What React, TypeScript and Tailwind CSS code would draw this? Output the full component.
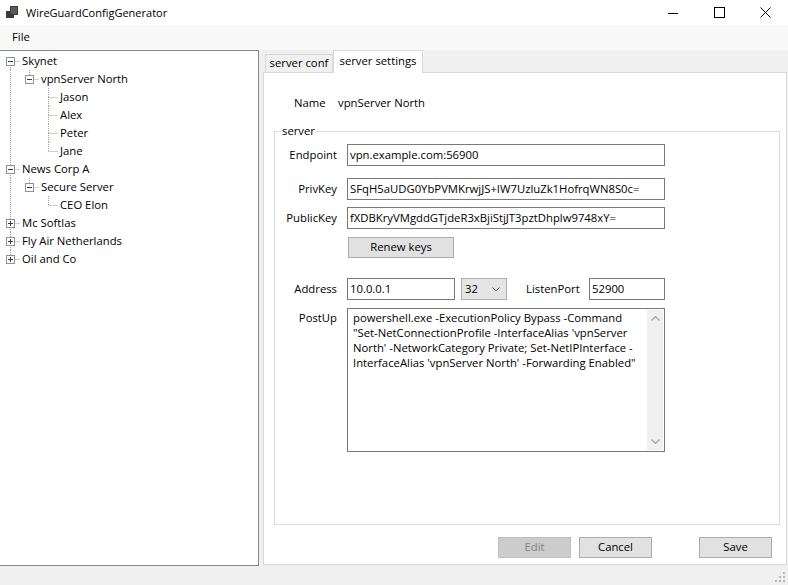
import React from "react";

type Row = {
  label: string;
  level: number;
  exp: "minus" | "plus" | null;
  anc: boolean[];
  top: boolean;
  bottom: boolean;
};

const rows: Row[] = [
  { label: "Skynet", level: 0, exp: "minus", anc: [], top: false, bottom: true },
  { label: "vpnServer North", level: 1, exp: "minus", anc: [true], top: true, bottom: false },
  { label: "Jason", level: 2, exp: null, anc: [true, false], top: true, bottom: true },
  { label: "Alex", level: 2, exp: null, anc: [true, false], top: true, bottom: true },
  { label: "Peter", level: 2, exp: null, anc: [true, false], top: true, bottom: true },
  { label: "Jane", level: 2, exp: null, anc: [true, false], top: true, bottom: false },
  { label: "News Corp A", level: 0, exp: "minus", anc: [], top: true, bottom: true },
  { label: "Secure Server", level: 1, exp: "minus", anc: [true], top: true, bottom: false },
  { label: "CEO Elon", level: 2, exp: null, anc: [true, false], top: true, bottom: false },
  { label: "Mc Softlas", level: 0, exp: "plus", anc: [], top: true, bottom: true },
  { label: "Fly Air Netherlands", level: 0, exp: "plus", anc: [], top: true, bottom: true },
  { label: "Oil and Co", level: 0, exp: "plus", anc: [], top: true, bottom: false },
];

function TreeRow({ r }: { r: Row }) {
  const w = 20 + 19 * r.level;
  const cx = 10.5 + 19 * r.level;
  const dot = { stroke: "#a0a0a0", strokeWidth: 1, strokeDasharray: "1 1" };
  return (
    <div className="flex h-[18px] items-center">
      <svg width={w} height={18} className="shrink-0">
        {r.anc.map((a, i) =>
          a ? <line key={i} x1={10.5 + 19 * i} y1={0} x2={10.5 + 19 * i} y2={18} {...dot} /> : null
        )}
        {r.top && <line x1={cx} y1={0} x2={cx} y2={9} {...dot} />}
        {r.bottom && <line x1={cx} y1={9} x2={cx} y2={18} {...dot} />}
        <line x1={cx} y1={9.5} x2={w} y2={9.5} {...dot} />
        {r.exp && (
          <g>
            <rect x={cx - 4} y={5.5} width={8} height={8} fill="#ffffff" stroke="#919191" strokeWidth={1} />
            <line x1={cx - 2.5} y1={9.5} x2={cx + 2.5} y2={9.5} stroke="#1e3c78" strokeWidth={1} />
            {r.exp === "plus" && (
              <line x1={cx} y1={7} x2={cx} y2={12} stroke="#1e3c78" strokeWidth={1} />
            )}
          </g>
        )}
      </svg>
      <span className="ml-[2px] whitespace-nowrap text-[11.3px] leading-[18px] text-black">{r.label}</span>
    </div>
  );
}

function Field({ label, value }: { label: string; value: string }) {
  return (
    <div className="flex h-[22px] items-center">
      <div className="w-[62px] text-right text-[11.3px] text-black">{label}</div>
      <div className="ml-[10px] flex h-[22px] w-[318px] items-center whitespace-nowrap border border-[#7a7a7a] bg-white pl-[2px] text-[11.3px] text-black">
        {value}
      </div>
    </div>
  );
}

export default function App() {
  return (
    <div className="flex h-[585px] w-[788px] flex-col overflow-hidden bg-[#f0f0f0] font-['Open_Sans',sans-serif] text-black">
      {/* Title bar */}
      <div className="flex h-[25px] shrink-0 items-center bg-white">
        <svg width={12} height={13} viewBox="0 0 12 13" className="ml-[6px] shrink-0">
          <rect x={4} y={0} width={8} height={9} fill="#3a3a3a" />
          <rect x={0} y={5} width={4} height={7} fill="#3a3a3a" />
          <rect x={4} y={9} width={4} height={3} fill="#3a3a3a" />
          <rect x={5} y={1} width={6} height={7} fill="#5a5a5a" />
        </svg>
        <span className="ml-[8px] text-[11px] leading-[16px] text-black">WireGuardConfigGenerator</span>
        <div className="ml-auto flex h-full items-center">
          <div className="flex h-full w-[46px] items-center justify-center">
            <svg width={10} height={10} viewBox="0 0 10 10">
              <line x1={0} y1={5.5} x2={10} y2={5.5} stroke="#000" strokeWidth={1} />
            </svg>
          </div>
          <div className="flex h-full w-[46px] items-center justify-center">
            <svg width={11} height={11} viewBox="0 0 11 11">
              <rect x={0.5} y={0.5} width={10} height={10} fill="none" stroke="#000" strokeWidth={1} />
            </svg>
          </div>
          <div className="flex h-full w-[46px] items-center justify-center">
            <svg width={11} height={11} viewBox="0 0 11 11">
              <line x1={0.5} y1={0.5} x2={10.5} y2={10.5} stroke="#000" strokeWidth={1} />
              <line x1={10.5} y1={0.5} x2={0.5} y2={10.5} stroke="#000" strokeWidth={1} />
            </svg>
          </div>
        </div>
      </div>

      {/* Menu bar */}
      <div className="flex h-[25px] shrink-0 items-center bg-[#f9f9f9] pl-[12px]">
        <span className="text-[11.3px] text-black">File</span>
      </div>

      {/* Main */}
      <div className="flex h-[516px] shrink-0">
        {/* Tree */}
        <div className="h-[516px] w-[259px] shrink-0 border-t border-r border-b border-[#828790] bg-white pt-[1px]">
          {rows.map((r, i) => (
            <TreeRow key={i} r={r} />
          ))}
        </div>

        {/* Tab control */}
        <div className="ml-[4px] mr-[1px] mb-[1px] flex flex-1 flex-col">
          <div className="flex h-[22px] shrink-0 items-end pl-[2px]">
            <div className="flex h-[18px] w-[68px] items-center justify-center border border-b-0 border-[#d9d9d9] bg-[#f0f0f0] text-[11.3px]">
              server conf
            </div>
            <div className="relative z-10 -mb-px flex h-[23px] w-[90px] items-start justify-center border border-b-0 border-[#d9d9d9] bg-white pt-[2px] text-[11.3px]">
              server settings
            </div>
          </div>
          <div className="flex flex-1 flex-col border border-[#d9d9d9] bg-white">
            {/* Name */}
            <div className="mt-[22px] flex h-[16px] items-center pl-[30px] text-[11.3px]">
              <span className="w-[44px]">Name</span>
              <span>vpnServer North</span>
            </div>

            {/* Group box */}
            <fieldset className="mt-[12px] ml-[10px] mr-[6px] h-[402px] border border-[#dcdcdc]">
              <legend className="ml-[6px] px-[1px] text-[11.3px] leading-[16px]">server</legend>
              <div className="flex flex-col pt-[5px]">
                <Field label="Endpoint" value="vpn.example.com:56900" />
                <div className="mt-[12px]">
                  <Field label="PrivKey" value="SFqH5aUDG0YbPVMKrwjJS+IW7UzluZk1HofrqWN8S0c=" />
                </div>
                <div className="mt-[7px]">
                  <Field label="PublicKey" value="fXDBKryVMgddGTjdeR3xBjiStjJT3pztDhplw9748xY=" />
                </div>
                <div className="mt-[8px] pl-[73px]">
                  <div className="flex h-[21px] w-[106px] items-center justify-center border border-[#adadad] bg-[#e1e1e1] text-[11.3px]">
                    Renew keys
                  </div>
                </div>

                {/* Address row */}
                <div className="mt-[20px] flex h-[22px] items-center">
                  <div className="w-[62px] text-right text-[11.3px]">Address</div>
                  <div className="ml-[10px] flex h-[22px] w-[108px] items-center border border-[#7a7a7a] bg-white pl-[2px] text-[11.3px]">
                    10.0.0.1
                  </div>
                  <div className="ml-[6px] flex h-[22px] w-[46px] items-center border border-[#adadad] bg-[#e5e5e5] pl-[3px] text-[11.3px]">
                    <span>32</span>
                    <svg width={8} height={5} viewBox="0 0 8 5" className="ml-auto mr-[6px]">
                      <polyline points="0.5,0.5 4,4 7.5,0.5" fill="none" stroke="#606060" strokeWidth={1} />
                    </svg>
                  </div>
                  <div className="ml-[19px] w-[53px] whitespace-nowrap text-[11.3px]">ListenPort</div>
                  <div className="ml-[10px] flex h-[22px] w-[76px] items-center border border-[#7a7a7a] bg-white pl-[2px] text-[11.3px]">
                    52900
                  </div>
                </div>

                {/* PostUp */}
                <div className="mt-[8px] flex">
                  <div className="w-[62px] pt-[2px] text-right text-[11.3px]">PostUp</div>
                  <div className="ml-[10px] flex h-[144px] w-[318px] border border-[#7a7a7a] bg-white">
                    <div className="flex-1 pl-[5px] pt-[1px] text-[11.3px] leading-[15px]">
                      <div className="whitespace-nowrap">powershell.exe -ExecutionPolicy Bypass -Command</div>
                      <div className="whitespace-nowrap">"Set-NetConnectionProfile -InterfaceAlias 'vpnServer</div>
                      <div className="whitespace-nowrap">North' -NetworkCategory Private; Set-NetIPInterface -</div>
                      <div className="whitespace-nowrap">InterfaceAlias 'vpnServer North' -Forwarding Enabled"</div>
                    </div>
                    <div className="my-[1px] mr-[1px] flex w-[16px] flex-col items-center justify-between bg-[#f0f0f0] py-[6px]">
                      <svg width={9} height={5} viewBox="0 0 9 5">
                        <polyline points="0.5,4.5 4.5,0.5 8.5,4.5" fill="none" stroke="#a3a3a3" strokeWidth={1.2} />
                      </svg>
                      <svg width={9} height={5} viewBox="0 0 9 5">
                        <polyline points="0.5,0.5 4.5,4.5 8.5,0.5" fill="none" stroke="#a3a3a3" strokeWidth={1.2} />
                      </svg>
                    </div>
                  </div>
                </div>
              </div>
            </fieldset>

            {/* Buttons */}
            <div className="mt-[12px] flex pl-[234px]">
              <div className="flex h-[21px] w-[73px] items-center justify-center border border-[#bfbfbf] bg-[#cccccc] text-[11.3px] text-[#838383]">
                Edit
              </div>
              <div className="ml-[8px] flex h-[21px] w-[73px] items-center justify-center border border-[#adadad] bg-[#e1e1e1] text-[11.3px]">
                Cancel
              </div>
              <div className="ml-[47px] flex h-[21px] w-[73px] items-center justify-center border border-[#adadad] bg-[#e1e1e1] text-[11.3px]">
                Save
              </div>
            </div>
          </div>
        </div>
      </div>

      {/* Status bar */}
      <div className="flex flex-1 items-end justify-end pr-[2px] pb-[2px]">
        <svg width={11} height={11} viewBox="0 0 11 11">
          <rect x={8} y={0} width={2} height={2} fill="#b8b8b8" />
          <rect x={8} y={4} width={2} height={2} fill="#b8b8b8" />
          <rect x={4} y={4} width={2} height={2} fill="#b8b8b8" />
          <rect x={8} y={8} width={2} height={2} fill="#b8b8b8" />
          <rect x={4} y={8} width={2} height={2} fill="#b8b8b8" />
          <rect x={0} y={8} width={2} height={2} fill="#b8b8b8" />
        </svg>
      </div>
    </div>
  );
}
